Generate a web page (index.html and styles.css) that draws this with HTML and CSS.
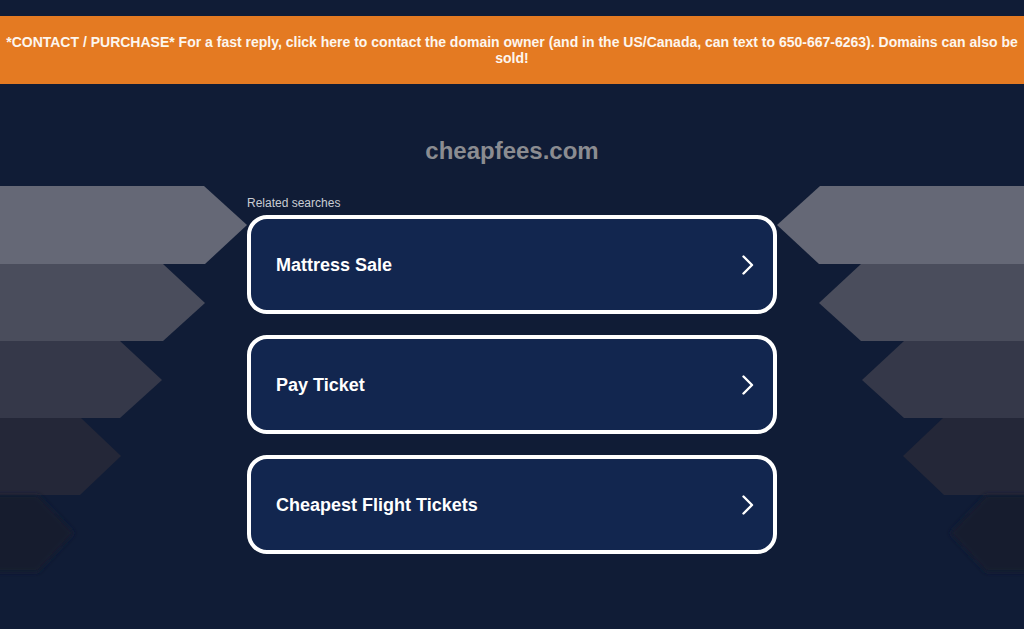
FILE: index.html
```html
<!DOCTYPE html>
<html lang="en">
<head>
<meta charset="utf-8">
<title>cheapfees.com</title>
<link rel="stylesheet" href="styles.css">
</head>
<body>
<div class="top-gap"></div>
<div class="banner">*CONTACT / PURCHASE* For a fast reply, click here to contact the domain owner (and in the US/Canada, can text to 650-667-6263). Domains can also be sold!</div>

<svg class="bands" width="1024" height="400" viewBox="0 0 1024 400" aria-hidden="true">
  <defs>
    <filter id="soft" x="-20%" y="-20%" width="140%" height="140%"><feGaussianBlur stdDeviation="2.5"/></filter>
  </defs>
  <g>
    <polygon fill="#656876" points="0,0 204,0 247,39 205,78 0,78"/>
    <polygon fill="#4a4d5c" points="0,78 163,78 205,117 163,155 0,155"/>
    <polygon fill="#353849" points="0,155 120,155 162,194 120,232 0,232"/>
    <polygon fill="#242738" points="0,232 81,232 121,270 80,309 0,309"/>
    <polygon fill="#171b2f" filter="url(#soft)" points="-10,309 38,309 74,347 38,386 -10,386"/>
    <polygon fill="#656876" points="1024,0 820,0 777,39 819,78 1024,78"/>
    <polygon fill="#4a4d5c" points="1024,78 861,78 819,117 861,155 1024,155"/>
    <polygon fill="#353849" points="1024,155 904,155 862,194 904,232 1024,232"/>
    <polygon fill="#242738" points="1024,232 943,232 903,270 944,309 1024,309"/>
    <polygon fill="#171b2f" filter="url(#soft)" points="1034,309 986,309 950,347 986,386 1034,386"/>
  </g>
</svg>

<main class="content">
  <h1 class="domain">cheapfees.com</h1>
  <div class="related">
    <div class="related-label">Related searches</div>
    <a class="card" href="#"><span class="card-text">Mattress Sale</span><svg class="chev" width="14" height="20" viewBox="0 0 14 20"><polyline points="2.5,1.5 11,10 2.5,18.5" fill="none" stroke="#fff" stroke-width="2.4" stroke-linecap="round" stroke-linejoin="round"/></svg></a>
    <a class="card" href="#"><span class="card-text">Pay Ticket</span><svg class="chev" width="14" height="20" viewBox="0 0 14 20"><polyline points="2.5,1.5 11,10 2.5,18.5" fill="none" stroke="#fff" stroke-width="2.4" stroke-linecap="round" stroke-linejoin="round"/></svg></a>
    <a class="card" href="#"><span class="card-text">Cheapest Flight Tickets</span><svg class="chev" width="14" height="20" viewBox="0 0 14 20"><polyline points="2.5,1.5 11,10 2.5,18.5" fill="none" stroke="#fff" stroke-width="2.4" stroke-linecap="round" stroke-linejoin="round"/></svg></a>
  </div>
</main>
</body>
</html>
```
FILE: styles.css
```css
html, body {
  margin: 0;
  padding: 0;
}
body {
  background: #101c36;
  font-family: "Liberation Sans", Arial, sans-serif;
  position: relative;
  min-height: 629px;
  overflow: hidden;
}
.top-gap {
  height: 16px;
}
.banner {
  background: #e47a22;
  color: #fdf6ee;
  font-weight: bold;
  font-size: 14px;
  line-height: 16px;
  text-align: center;
  padding: 18px 5px;
  height: 32px;
}
.bands {
  position: absolute;
  top: 186px;
  left: 0;
  z-index: 0;
}
.content {
  position: relative;
  z-index: 1;
  width: 530px;
  margin: 0 auto;
  display: flex;
  flex-direction: column;
}
.domain {
  margin: 53px 0 0;
  font-size: 24px;
  line-height: 28px;
  font-weight: bold;
  color: #8b8c91;
  text-align: center;
}
.related {
  margin-top: 31px;
  display: flex;
  flex-direction: column;
}
.related-label {
  font-size: 12px;
  line-height: 14px;
  color: #c9ccd3;
  margin-bottom: 5px;
}
.card {
  box-sizing: border-box;
  height: 99px;
  border: 4px solid #ffffff;
  border-radius: 20px;
  background: #12264f;
  display: flex;
  align-items: center;
  justify-content: space-between;
  padding: 2px 18px 0 25px;
  margin-bottom: 21px;
  text-decoration: none;
}
.card-text {
  color: #ffffff;
  font-size: 18px;
  font-weight: bold;
}
.chev {
  display: block;
  margin-top: -2px;
}
```
